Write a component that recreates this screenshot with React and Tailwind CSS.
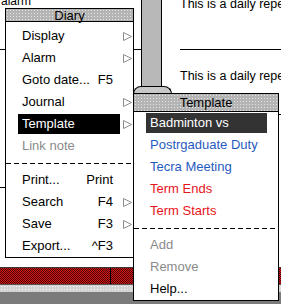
import React from "react";
import clsx from "clsx";

const titleBar =
  "bg-[#b4b4b4] bg-[radial-gradient(circle,#e4e4e4_30%,transparent_36%)] bg-[length:3px_3px] border-b border-black flex items-center justify-center text-[13px] leading-none";

const Arrow = () => (
  <svg width="9" height="9" viewBox="0 0 9 9" className="shrink-0">
    <path d="M0.5 0.5 L8.5 4.5 L0.5 8.5 Z" fill="#fff" stroke="#8c8c8c" strokeWidth="1" />
  </svg>
);

const diaryItems = [
  { label: "Display", arrow: true },
  { label: "Alarm", arrow: true },
  { label: "Goto date...", shortcut: "F5" },
  { label: "Journal", arrow: true },
  { label: "Template", arrow: true, selected: true },
  { label: "Link note", tone: "text-[#8a8a8a]", sep: true },
  { label: "Print...", shortcut: "Print" },
  { label: "Search", shortcut: "F4", arrow: true },
  { label: "Save", shortcut: "F3", arrow: true },
  { label: "Export...", shortcut: "^F3" },
];

const templateItems = [
  { label: "Badminton vs", selected: true },
  { label: "Postrgaduate Duty", tone: "text-[#1f5bbf]" },
  { label: "Tecra Meeting", tone: "text-[#1f5bbf]" },
  { label: "Term Ends", tone: "text-[#e8141c]" },
  { label: "Term Starts", tone: "text-[#e8141c]", sep: true },
  { label: "Add", tone: "text-[#8a8a8a]" },
  { label: "Remove", tone: "text-[#8a8a8a]" },
  { label: "Help..." },
];

const Separator = () => (
  <div className="h-[12px] flex items-center">
    <div className="h-px w-full bg-[repeating-linear-gradient(90deg,#000_0_5px,transparent_5px_8px)]" />
  </div>
);

const MenuRows = ({ items, width, selectedBg }) => (
  <div>
    {items.map(item => (
      <React.Fragment key={item.label}>
        <div className="h-[22px] flex items-center">
          <div
            className={clsx(
              "ml-3 h-[20px] flex items-center justify-between pl-1 pr-[7px] whitespace-nowrap",
              width,
              item.selected ? clsx(selectedBg, "text-white") : item.tone || "text-black"
            )}
          >
            <span>{item.label}</span>
            {item.shortcut && <span>{item.shortcut}</span>}
          </div>
          {item.arrow && (
            <div className="ml-[3px] flex items-center">
              <Arrow />
            </div>
          )}
        </div>
        {item.sep && <Separator />}
      </React.Fragment>
    ))}
  </div>
);

export default function App() {
  return (
    <div className="relative w-[281px] h-[304px] overflow-hidden bg-white font-['Liberation_Sans',Arial,sans-serif] text-[13px] leading-[20px]">
      {/* window behind the menus */}
      <div className="flex h-[267px]">
        <div className="w-[141px] flex flex-col overflow-hidden">
          <div className="-mt-[6px] pl-px text-[12px] leading-[14px]">alarm</div>
          <div className="mt-[41px] h-px bg-black" />
          <div className="mt-[137px] h-px bg-black" />
        </div>
        <div className="w-[21px] h-[87px] bg-[#b8b8b8] border-x border-black" />
        <div className="flex-1 pl-[18px] flex flex-col overflow-hidden text-[12.5px] leading-[14px] whitespace-nowrap">
          <div className="-mt-[3px]">This is a daily repeating event</div>
          <div className="mt-[38px] h-px bg-black" />
          <div className="mt-[19px]">This is a daily repeating event</div>
          <div className="mt-[31px] h-px bg-black" />
        </div>
      </div>
      <div className="h-px bg-[#3a3a3a]" />
      <div className="h-[16px] flex bg-[#b01818] bg-[repeating-conic-gradient(#d41414_0%_25%,#4e0a0a_0%_50%)] bg-[length:2px_2px]">
        <div className="ml-[110px] w-px h-full bg-black" />
      </div>
      <div className="h-px bg-[#555]" />
      <div className="h-[7px] bg-[#d4d4d4] bg-[radial-gradient(circle,#f2f2f2_30%,transparent_36%)] bg-[length:3px_3px]" />
      <div className="h-[12px] bg-[#7b7b7b]" />

      {/* scroll knob peeking under the submenu */}
      <div className="absolute left-[133px] top-[86px] w-[39px] h-[8px] rounded-t-full border border-black bg-[#c8c8c8]" />

      {/* Diary menu */}
      <div className="absolute left-[5px] top-[8px] w-[129px] border border-black bg-white">
        <div className={clsx(titleBar, "h-[13px]")}>Diary</div>
        <div className="pt-[3px]">
          <MenuRows items={diaryItems} width="w-[102px]" selectedBg="bg-black" />
        </div>
      </div>

      {/* Template submenu */}
      <div className="absolute left-[133px] top-[93px] w-[146px] border border-black bg-white">
        <div className={clsx(titleBar, "h-[18px]")}>Template</div>
        <MenuRows items={templateItems} width="w-[121px]" selectedBg="bg-[#333333]" />
      </div>
    </div>
  );
}
